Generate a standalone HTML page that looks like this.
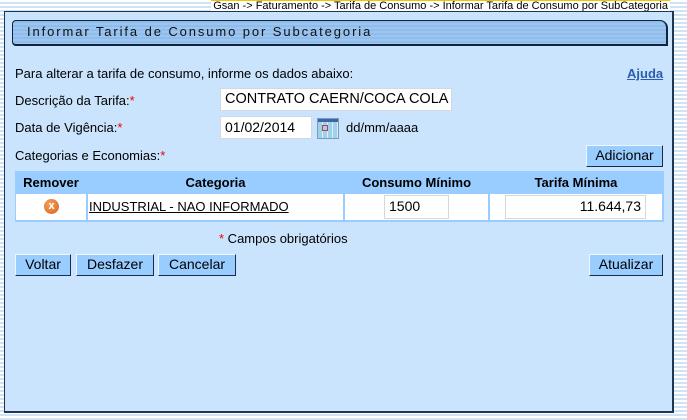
<!DOCTYPE html>
<html><head><meta charset="utf-8"><style>
*{margin:0;padding:0;box-sizing:border-box}
body{width:687px;height:420px;position:relative;overflow:hidden;font-family:"Liberation Sans",Arial,sans-serif;font-size:13px;color:#000;
background:repeating-linear-gradient(#fff 0 2px,#cfe3f6 2px 4px)}
.a{position:absolute;white-space:nowrap}
#panel{position:absolute;left:4px;top:11px;width:670px;height:402px;background:#cbe4fd;border:1px solid #1f3550;border-right-width:2px;border-bottom-width:2px}
#crumb{right:17px;top:-1px;font-size:11px;background:#fff;border-top:2px solid #f5c400;padding:0 2px;line-height:11px}
#title{left:12px;top:20px;width:656px;height:26px;border:1px solid #10243d;border-right-width:2px;border-bottom-width:2px;border-radius:4px 8px 0 4px;
background:repeating-linear-gradient(#8fbceb 0 2px,#9cc6f0 2px 4px);font-size:13px;letter-spacing:1.9px;padding:3px 0 0 14px;color:#111}
.in{background:#fff;border:1px solid #d0d8e0;font-size:14px;padding:2px 4px;height:23px;overflow:hidden}
.btn{background:#99ccff;border:1px solid;border-color:#eef6ff #1a2d48 #1a2d48 #eef6ff;font-size:14px;height:22px;text-align:center;line-height:19px}
.r{color:#e00}
</style></head><body>
<div class="a" id="crumb">Gsan -&gt; Faturamento -&gt; Tarifa de Consumo -&gt; Informar Tarifa de Consumo por SubCategoria</div>
<div id="panel"></div>
<div class="a" id="title">Informar Tarifa de Consumo por Subcategoria</div>
<div class="a" style="left:15px;top:66px">Para alterar a tarifa de consumo, informe os dados abaixo:</div>
<div class="a" style="left:627px;top:66px;color:#2a5db0;font-weight:bold;text-decoration:underline">Ajuda</div>
<div class="a" style="left:15px;top:93px">Descrição da Tarifa:<span class="r">*</span></div>
<div class="a in" style="left:220px;top:88px;width:232px;font-size:14.5px;padding-right:0"><span style="display:inline-block;width:224px;overflow:hidden">CONTRATO CAERN/COCA COLA</span></div>
<div class="a" style="left:15px;top:120px">Data de Vigência:<span class="r">*</span></div>
<div class="a in" style="left:220px;top:116px;width:92px">01/02/2014</div>
<div class="a" style="left:317px;top:118px;width:22px;height:21px;border:1px solid #7e98b8;background:repeating-linear-gradient(90deg,#9fd0ec 0 4px,#d8eef8 4px 5px);">
<div style="height:3px;background:#3c66a8"></div>
<div style="position:absolute;left:4px;top:6px;width:6px;height:6px;border:1px solid #c04040"></div></div>
<div class="a" style="left:346px;top:120px">dd/mm/aaaa</div>
<div class="a" style="left:15px;top:148px">Categorias e Economias:<span class="r">*</span></div>
<div class="a btn" style="left:586px;top:145px;width:77px">Adicionar</div>
<div class="a" style="left:15px;top:171px;width:649px;height:51px;background:#99ccff"></div>
<div class="a" style="top:175px;left:16px;width:70px;text-align:center;font-weight:bold;font-size:13px">Remover</div>
<div class="a" style="top:175px;left:88px;width:255px;text-align:center;font-weight:bold;font-size:13px">Categoria</div>
<div class="a" style="top:175px;left:345px;width:143px;text-align:center;font-weight:bold;font-size:13px">Consumo Mínimo</div>
<div class="a" style="top:175px;left:490px;width:172px;text-align:center;font-weight:bold;font-size:13px">Tarifa Mínima</div>
<div class="a" style="top:194px;left:16px;width:70px;height:26px;background:#fff"></div>
<div class="a" style="top:194px;left:88px;width:255px;height:26px;background:#fff"></div>
<div class="a" style="top:194px;left:345px;width:143px;height:26px;background:#fff"></div>
<div class="a" style="top:194px;left:490px;width:172px;height:26px;background:#fff"></div>
<div class="a" style="left:44px;top:199px;width:15px;height:15px;border-radius:50%;background:radial-gradient(circle at 40% 35%,#f6a060,#d5621a);color:#fff;font-size:11px;font-weight:bold;text-align:center;line-height:15px">x</div>
<div class="a" style="left:89px;top:199px;font-size:13px;text-decoration:underline">INDUSTRIAL - NAO INFORMADO</div>
<div class="a in" style="left:384px;top:195px;width:65px;height:24px">1500</div>
<div class="a in" style="left:505px;top:195px;width:141px;height:24px;text-align:right">11.644,73</div>
<div class="a" style="left:219px;top:231px"><span class="r">*</span> Campos obrigatórios</div>
<div class="a btn" style="left:15px;top:254px;width:56px">Voltar</div>
<div class="a btn" style="left:76px;top:254px;width:78px">Desfazer</div>
<div class="a btn" style="left:158px;top:254px;width:78px">Cancelar</div>
<div class="a btn" style="left:589px;top:254px;width:74px">Atualizar</div>
</body></html>
